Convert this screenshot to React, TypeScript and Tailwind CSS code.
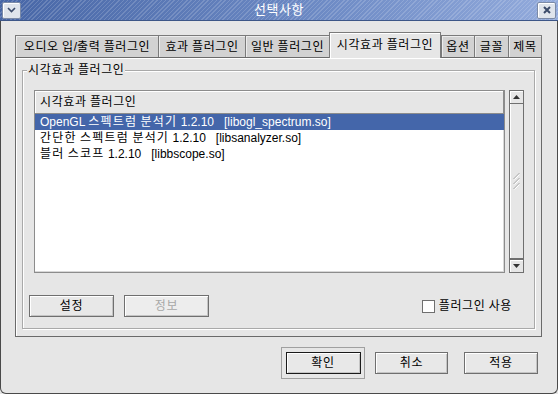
import React from "react";

const font = { fontFamily: '"Liberation Sans", "Noto Sans CJK KR", sans-serif' };

function K({ t, wide }: { t: string; wide?: boolean }) {
  const parts = t.split(/([\uAC00-\uD7A3]+)/);
  return (
    <span className="whitespace-pre">
      {parts.map((p, i) =>
        /[\uAC00-\uD7A3]/.test(p) ? (
          <span key={i} className={wide ? "tracking-[1.2px]" : "tracking-[0.6px]"}>
            {p}
          </span>
        ) : (
          <span key={i}>{p}</span>
        )
      )}
    </span>
  );
}

function Btn({
  children,
  w,
  disabled,
  dflt,
}: {
  children: string;
  w: string;
  disabled?: boolean;
  dflt?: boolean;
}) {
  return (
    <div
      className={`${w} h-[22px] flex items-center justify-center text-[12px] border ${
        dflt ? "border-[#1a1a1a]" : "border-[#6f6f6f]"
      } ${
        disabled ? "bg-[#ededed] text-[#a8a8a8]" : "bg-[#e8e8e8] text-black"
      } shadow-[inset_1px_1px_0_#ffffff,inset_-1px_-1px_0_#c4c4c4]`}
    >
      <K t={children} />
    </div>
  );
}

function Tab({ label, w, active }: { label: string; w: string; active?: boolean }) {
  if (active) {
    return (
      <div
        className={`${w} h-[26px] -mb-px relative z-10 bg-[#e6e6e6] border-l border-t border-r border-[#7a7a7a] shadow-[inset_1px_1px_0_#ffffff] flex items-center justify-center text-[12px] pb-[2px]`}
      >
        <K t={label} />
      </div>
    );
  }
  return (
    <div
      className={`${w} h-[22px] bg-[#d2d2d2] border-l border-t border-r border-[#7a7a7a] shadow-[inset_1px_1px_0_#ececec] flex items-center justify-center text-[12px] -mr-px`}
    >
      <K t={label} />
    </div>
  );
}

export default function App() {
  return (
    <div
      className="w-[558px] h-[394px] flex flex-col bg-[#e6e6e6] text-black overflow-hidden"
      style={font}
    >
      {/* Title bar */}
      <div className="h-[21px] flex items-center justify-between px-[2px] relative [background-image:repeating-linear-gradient(135deg,rgba(255,255,255,0.16)_0px,rgba(255,255,255,0.16)_1px,transparent_1px,transparent_3px),linear-gradient(to_right,#4766a6,#6f8cc6_60%,#93abdc)] border-b border-[#3d5687]">
        <div className="w-[19px] h-[17px] bg-[#dfe4ec] border border-[#7b8aa7] rounded-[2px] flex items-center justify-center shadow-[inset_1px_1px_0_#ffffff]">
          <svg width="9" height="6" viewBox="0 0 9 6">
            <path d="M1 1 L4.5 4.5 L8 1" stroke="#3a4a6a" strokeWidth="1.6" fill="none" />
          </svg>
        </div>
        <div className="absolute inset-0 flex items-center justify-center text-white text-[13px] pointer-events-none">
          <K t="선택사항" />
        </div>
        <div className="w-[19px] h-[17px] bg-[#dfe4ec] border border-[#7b8aa7] rounded-[2px] flex items-center justify-center shadow-[inset_1px_1px_0_#ffffff]">
          <svg width="8" height="8" viewBox="0 0 8 8">
            <path d="M1 1 L7 7 M7 1 L1 7" stroke="#3a4a6a" strokeWidth="2" fill="none" />
          </svg>
        </div>
      </div>

      {/* Body */}
      <div className="flex-1 flex flex-col border-l border-r border-b border-[#4a4a4a] rounded-b-[6px] pl-[14px] pr-[14px] pt-[11px]">
        {/* Tabs */}
        <div className="h-[25px] flex items-end">
          <Tab label="오디오 입/출력 플러그인" w="w-[144px]" />
          <Tab label="효과 플러그인" w="w-[88px]" />
          <Tab label="일반 플러그인" w="w-[85px]" />
          <Tab label="시각효과 플러그인" w="w-[112px]" active />
          <Tab label="옵션" w="w-[34px]" />
          <Tab label="글꼴" w="w-[35px]" />
          <Tab label="제목" w="w-[34px]" />
        </div>

        {/* Panel */}
        <div className="w-[527px] h-[280px] border border-[#6a6a6a] shadow-[inset_1px_1px_0_#ffffff] pt-[12px] pl-[6px]">
          <div className="relative w-[513px] h-[259px] border border-[#a9a9a9] shadow-[inset_1px_1px_0_#ffffff,1px_1px_0_#ffffff] pl-[6px] pt-[19px] pr-[9px]">
            <span className="absolute -top-[8px] left-[4px] px-[1px] bg-[#e6e6e6] text-[12px] leading-[14px]">
              <K t="시각효과 플러그인" />
            </span>
            <div className="flex gap-[4px] pl-[5px]">
              {/* List */}
              <div className="w-[471px] h-[183px] bg-white border border-[#8c8c8c] shadow-[inset_-1px_-1px_0_#d8d8d8]">
                <div className="h-[23px] bg-[#e6e6e6] border-b border-r border-[#8c8c8c] shadow-[inset_1px_1px_0_#ffffff] flex items-center pl-[5px] text-[12px]">
                  <K t="시각효과 플러그인" />
                </div>
                <div className="h-[16px] bg-[#4466aa] text-white flex items-center pl-[5px] text-[12px]">
                  <K wide t={"OpenGL 스펙트럼 분석기 1.2.10   [libogl_spectrum.so]"} />
                </div>
                <div className="h-[16px] flex items-center pl-[5px] text-[12px]">
                  <K wide t={"간단한 스펙트럼 분석기 1.2.10   [libsanalyzer.so]"} />
                </div>
                <div className="h-[16px] flex items-center pl-[5px] text-[12px]">
                  <K wide t={"블러 스코프 1.2.10   [libbscope.so]"} />
                </div>
              </div>
              {/* Scrollbar */}
              <div className="w-[15px] h-[183px] flex flex-col bg-[#d6d6d6]">
                <div className="h-[14px] border border-[#6f6f6f] bg-[#e6e6e6] shadow-[inset_1px_1px_0_#ffffff] flex items-center justify-center">
                  <svg width="7" height="4" viewBox="0 0 7 4">
                    <path d="M0 4 L3.5 0 L7 4 Z" fill="#333" />
                  </svg>
                </div>
                <div className="flex-1 border-x border-b border-[#6f6f6f] bg-[#e6e6e6] shadow-[inset_1px_0_0_#ffffff] flex items-center justify-center">
                  <svg width="7" height="17" viewBox="0 0 7 17">
                    <path d="M0.5 6 L6.5 0 M0.5 11 L6.5 5 M0.5 16 L6.5 10" stroke="#a8a8a8" strokeWidth="1" />
                    <path d="M1.5 6.5 L6.5 1.5 M1.5 11.5 L6.5 6.5 M1.5 16.5 L6.5 11.5" stroke="#ffffff" strokeWidth="1" />
                  </svg>
                </div>
                <div className="h-[14px] border border-[#6f6f6f] bg-[#e6e6e6] shadow-[inset_1px_1px_0_#ffffff] flex items-center justify-center">
                  <svg width="7" height="4" viewBox="0 0 7 4">
                    <path d="M0 0 L3.5 4 L7 0 Z" fill="#333" />
                  </svg>
                </div>
              </div>
            </div>
            {/* Buttons row */}
            <div className="flex items-center mt-[22px]">
              <Btn w="w-[85px]">설정</Btn>
              <div className="w-[10px]" />
              <Btn w="w-[85px]" disabled>
                정보
              </Btn>
              <div className="flex-1" />
              <div className="flex items-center gap-[4px] mr-[13px] text-[12px]">
                <div className="w-[13px] h-[13px] bg-white border border-[#6f6f6f]" />
                <K t="플러그인 사용" />
              </div>
            </div>
          </div>
        </div>

        {/* Bottom buttons */}
        <div className="flex justify-end items-center mt-[10px] mr-[5px]">
          <div className="p-[3px] border border-[#a0a0a0] w-[84px] h-[32px] flex items-center justify-center">
            <Btn w="w-[75px]" dflt>
              확인
            </Btn>
          </div>
          <div className="w-[10px]" />
          <Btn w="w-[73px]">취소</Btn>
          <div className="w-[16px]" />
          <Btn w="w-[74px]">적용</Btn>
        </div>
      </div>
    </div>
  );
}
